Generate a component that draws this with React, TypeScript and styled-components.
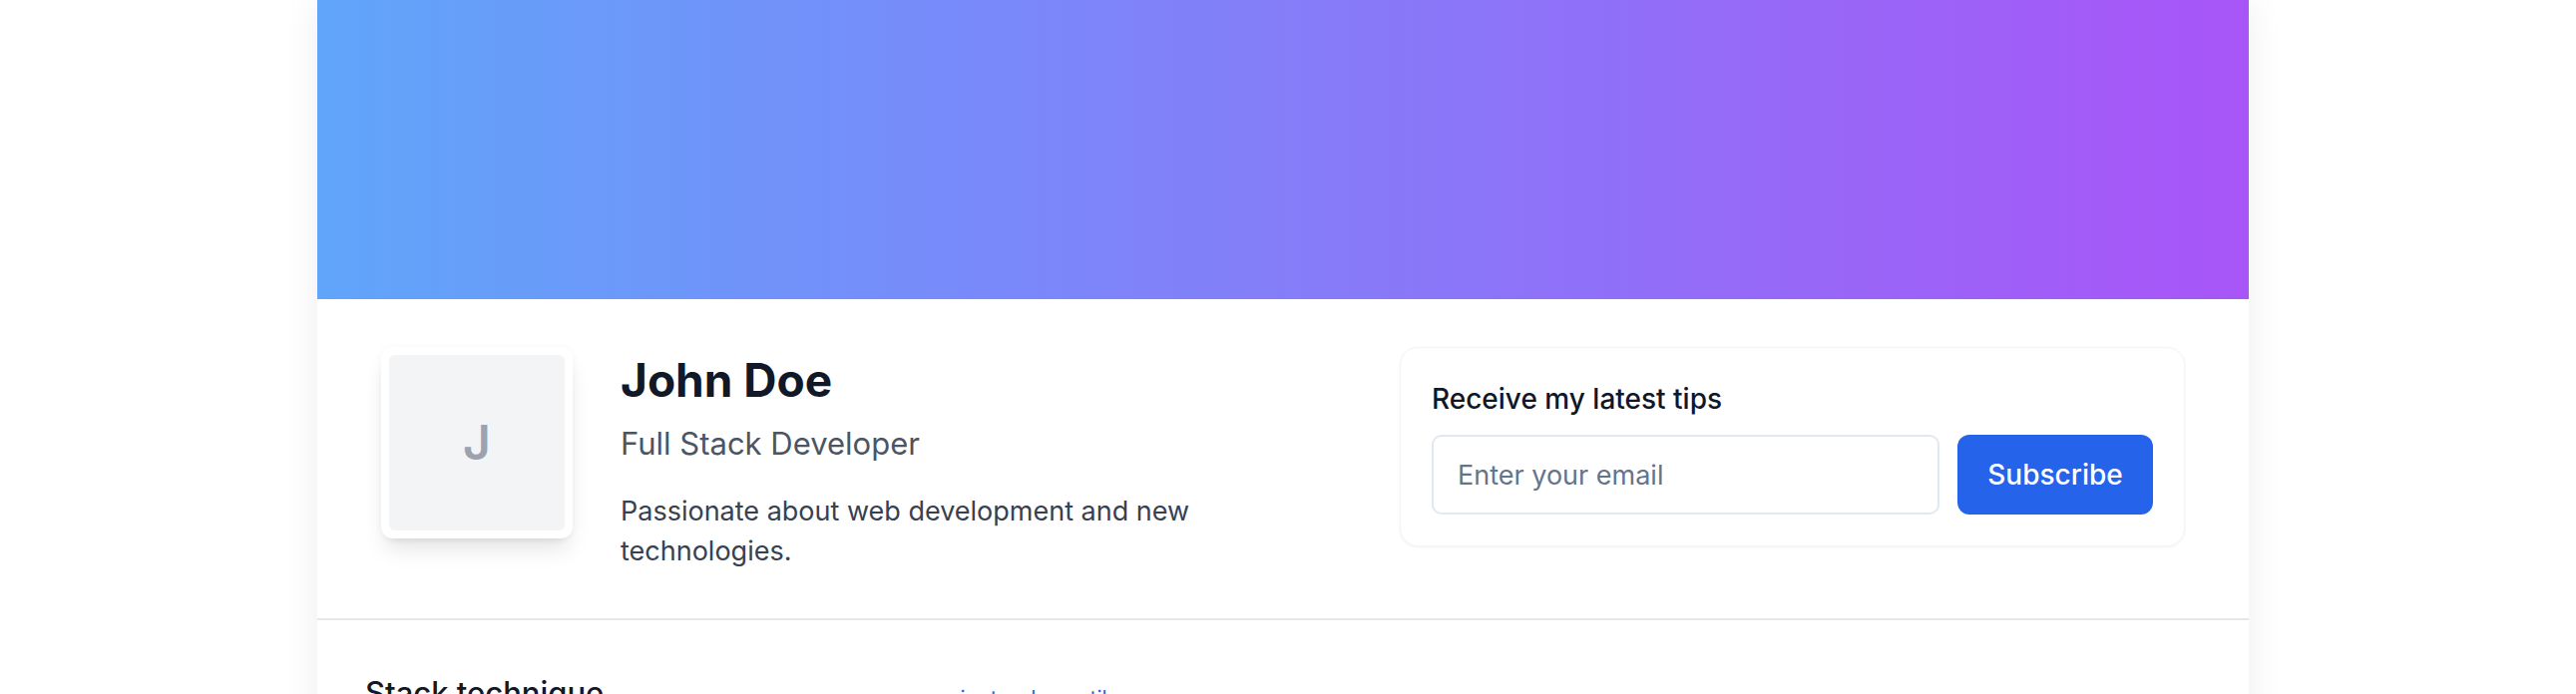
import React from "react";
import styled, { createGlobalStyle } from "styled-components";

const GlobalStyle = createGlobalStyle`
  html, body {
    margin: 0;
    padding: 0;
    background: #ffffff;
    overflow: hidden;
  }
  body {
    font-family: Inter, "Noto Sans", "Liberation Sans", sans-serif;
    -webkit-font-smoothing: antialiased;
  }
  *, *::before, *::after { box-sizing: border-box; }
`;

const Page = styled.div`
  display: flex;
  justify-content: center;
  padding-right: 10px;
  min-height: 696px;
`;

const Card = styled.main`
  width: 1936px;
  flex: none;
  background: #ffffff;
  box-shadow: 0 0 34px rgba(0, 0, 0, 0.07);
`;

const Banner = styled.div`
  height: 300px;
  background: linear-gradient(to right, #60a5fa, #a855f7);
`;

const Profile = styled.section`
  display: flex;
  align-items: flex-start;
  gap: 48px;
  padding: 48px 64px 47px;
  border-bottom: 2px solid #e5e7eb;
`;

const AvatarFrame = styled.div`
  flex: none;
  width: 192px;
  height: 192px;
  padding: 8px;
  background: #ffffff;
  border-radius: 12px;
  box-shadow: 0 15px 22px -4px rgba(0, 0, 0, 0.1),
    0 6px 9px -6px rgba(0, 0, 0, 0.1), 0 0 10px rgba(0, 0, 0, 0.03);
`;

const AvatarFace = styled.div`
  width: 100%;
  height: 100%;
  display: flex;
  align-items: center;
  justify-content: center;
  background: #f3f4f6;
  border-radius: 6px;
  color: #9ca3af;
  font-size: 48px;
  font-weight: 600;
  line-height: 1;
`;

const Info = styled.div`
  flex: 1;
  min-width: 0;
  padding-top: 6px;
`;

const Name = styled.h1`
  margin: 0;
  font-size: 46px;
  line-height: 54px;
  font-weight: 700;
  color: #111827;
`;

const Role = styled.p`
  margin: 16px 0 0;
  font-size: 31px;
  line-height: 42px;
  color: #4b5563;
`;

const Bio = styled.p`
  margin: 27px 0 0;
  max-width: 672px;
  font-size: 27px;
  line-height: 40px;
  color: #374151;
`;

const Newsletter = styled.form`
  flex: none;
  width: 787px;
  padding: 31px;
  background: #ffffff;
  border: 1px solid #f3f4f6;
  border-radius: 18px;
  box-shadow: 0 1px 3px rgba(0, 0, 0, 0.05);
`;

const NewsletterLabel = styled.label`
  display: block;
  margin-bottom: 16px;
  font-size: 28px;
  line-height: 40px;
  font-weight: 500;
  color: #0f172a;
`;

const FieldRow = styled.div`
  display: flex;
  gap: 18px;
`;

const EmailInput = styled.input`
  flex: 1;
  min-width: 0;
  height: 80px;
  padding: 0 24px;
  border: 2px solid #e2e8f0;
  border-radius: 10px;
  font-family: inherit;
  font-size: 27px;
  color: #0f172a;
  background: #ffffff;
  outline: none;
  &::placeholder {
    color: #64748b;
  }
`;

const SubscribeButton = styled.button`
  flex: none;
  width: 196px;
  height: 80px;
  border: none;
  border-radius: 12px;
  background: #2563eb;
  color: #ffffff;
  font-family: inherit;
  font-size: 28px;
  font-weight: 500;
  cursor: pointer;
`;

const StackSection = styled.section`
  display: grid;
  grid-template-columns: 565px 1fr;
  align-items: start;
  padding: 53px 48px 48px;
`;

const SectionTitle = styled.h2`
  margin: 0;
  font-size: 31px;
  line-height: 40px;
  font-weight: 500;
  color: #111827;
`;

const SectionLink = styled.a`
  display: block;
  padding-top: 11px;
  font-size: 21px;
  line-height: 30px;
  color: #2563eb;
  text-decoration: none;
`;

export default function App() {
  return (
    <>
      <GlobalStyle />
      <Page>
        <Card>
          <Banner />
          <Profile>
            <AvatarFrame>
              <AvatarFace>J</AvatarFace>
            </AvatarFrame>
            <Info>
              <Name>John Doe</Name>
              <Role>Full Stack Developer</Role>
              <Bio>Passionate about web development and new technologies.</Bio>
            </Info>
            <Newsletter onSubmit={(e) => e.preventDefault()}>
              <NewsletterLabel htmlFor="email">Receive my latest tips</NewsletterLabel>
              <FieldRow>
                <EmailInput id="email" type="email" placeholder="Enter your email" />
                <SubscribeButton type="submit">Subscribe</SubscribeButton>
              </FieldRow>
            </Newsletter>
          </Profile>
          <StackSection>
            <SectionTitle>Stack technique</SectionTitle>
            <SectionLink href="#">+ ajouter des outils</SectionLink>
          </StackSection>
        </Card>
      </Page>
    </>
  );
}
